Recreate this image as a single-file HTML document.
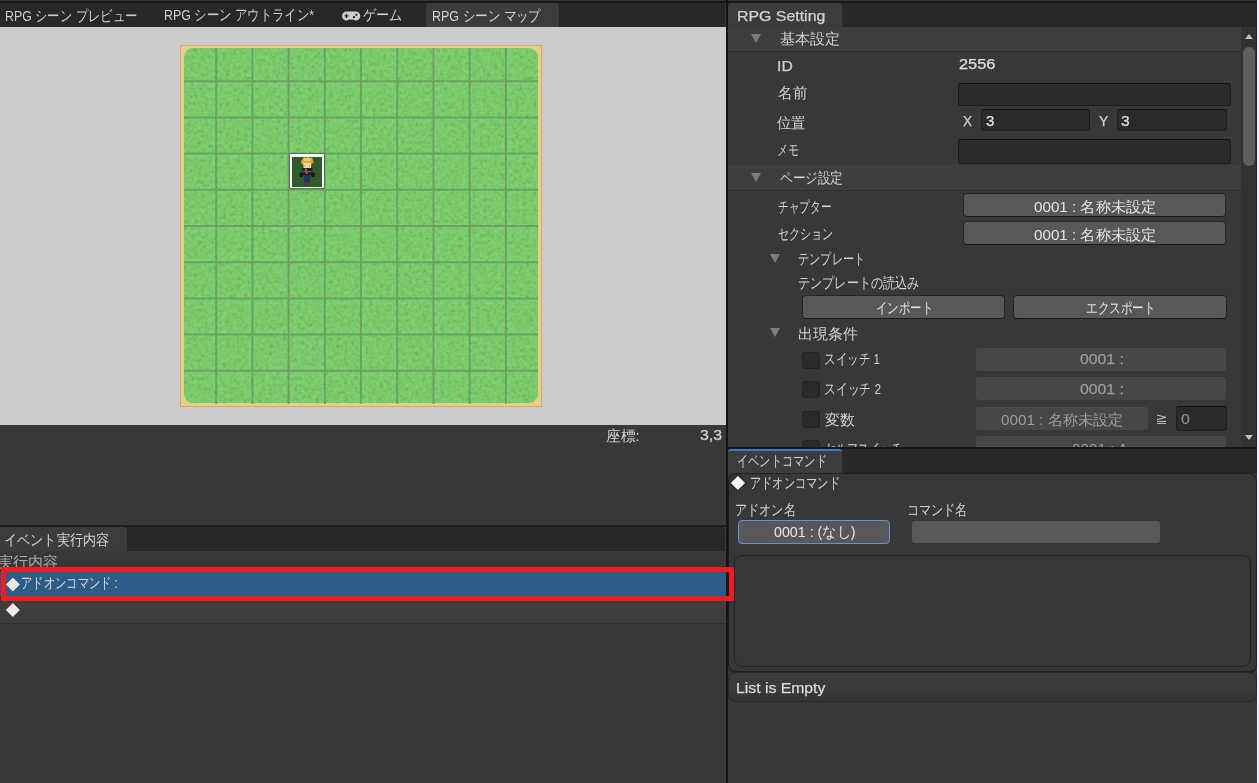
<!DOCTYPE html>
<html><head><meta charset="utf-8">
<style>
*{box-sizing:border-box;margin:0;padding:0}
html,body{width:1259px;height:783px;overflow:hidden;background:#383838}
body{position:relative;font-family:"Liberation Sans",sans-serif;font-size:15px;color:#d2d2d2}
.a{position:absolute}
.t{position:absolute;white-space:nowrap;line-height:18px;height:18px;z-index:5}
.t span{display:inline-block;transform-origin:0 0}
.t{will-change:transform}
.b span{-webkit-text-stroke:0.25px currentColor}
.fld{position:absolute;background:#2a2a2a;border:1px solid #1e1e1e;border-top-color:#101010;border-radius:3px}
.btn{position:absolute;background:#585858;border-radius:4px;border:1px solid #262626;border-bottom-color:#1c1c1c}
.dis{position:absolute;background:#474747;border-radius:3px}
.cb{position:absolute;width:18px;height:17px;background:#2a2a2a;border:1px solid #232323;border-radius:3px}
.tri{position:absolute;width:0;height:0;border-left:5px solid transparent;border-right:5px solid transparent;border-top:9px solid #7c7c7c}
body.textonly{background:#000}
body.textonly > *:not(.t){visibility:hidden}
</style></head><body>

<!-- top strip -->
<div class="a" style="left:0;top:0;width:1259px;height:1px;background:#333"></div>
<div class="a" style="left:0;top:1px;width:1259px;height:2px;background:#191919"></div>

<!-- ===== LEFT PANEL ===== -->
<div class="a" style="left:0;top:3px;width:725px;height:24px;background:#282828;border-radius:0 4px 0 0"></div>
<svg class="a" style="left:342px;top:11.2px" width="19" height="10" viewBox="0 0 19 10">
  <path d="M4.6 0.5 H13.6 A4.5 4.5 0 0 1 13.8 9.6 C12.6 9.6 12.1 8.4 11 8.4 H7.3 C6.2 8.4 5.7 9.6 4.5 9.6 A4.5 4.5 0 0 1 4.6 0.5Z" fill="#cdcdcd"/>
  <path d="M2.4 4.9 H6.6 M4.5 2.8 V7" stroke="#262626" stroke-width="1.3"/>
  <circle cx="12" cy="6.2" r="1.15" fill="#262626"/><circle cx="14.4" cy="3.8" r="1.15" fill="#262626"/>
</svg>
<div class="a" style="left:426px;top:3px;width:133px;height:24px;background:#3c3c3c;border-radius:4px 4px 0 0"></div>

<!-- map view -->
<div class="a" style="left:0;top:27px;width:726px;height:398px;background:#cbcbcb"></div>
<div class="a" style="left:180px;top:45px;width:362px;height:362px;background:#e6cf8a;border:1px solid #cfae6c"></div>
<div class="a" style="left:184px;top:48px;width:354px;height:355px;background:#73cc64;border-radius:9px"></div>
<svg class="a" style="left:180px;top:45px" width="362" height="362">
  <defs>
    <filter id="nz" x="0" y="0" width="100%" height="100%">
      <feTurbulence type="fractalNoise" baseFrequency="0.28" numOctaves="3" seed="5"/>
      <feColorMatrix type="matrix" values="1.6 0 0 0 -0.3  1.6 0 0 0 -0.3  1.6 0 0 0 -0.3  0 0 0 0 1"/>
    </filter>
    <clipPath id="gc"><rect x="4" y="3.5" width="354" height="355" rx="9"/></clipPath>
  </defs>
  <g clip-path="url(#gc)">
    <rect x="0" y="0" width="362" height="362" filter="url(#nz)" opacity="0.12" style="mix-blend-mode:overlay"/>
  </g>
  <g stroke="#62935a" stroke-width="2" opacity="0.7">
    <path d="M36.2 3V359 M72.4 3V359 M108.6 3V359 M144.8 3V359 M181 3V359 M217.2 3V359 M253.4 3V359 M289.6 3V359 M325.8 3V359"/>
    <path d="M4 36.2H358 M4 72.4H358 M4 108.6H358 M4 144.8H358 M4 181H358 M4 217.2H358 M4 253.4H358 M4 289.6H358 M4 325.8H358"/>
  </g>
</svg>
<!-- character -->
<div class="a" style="left:289px;top:153px;width:36px;height:36px;background:#4f7a4a"></div>
<div class="a" style="left:290px;top:154px;width:34px;height:34px;background:#fff"></div>
<div class="a" style="left:292px;top:157px;width:30px;height:30px;background:#2f5a2c"></div>
<svg class="a" style="left:292px;top:157px" width="30" height="30">
  <path d="M9 7 L9.5 3 L11 1.5 L12 0 L14 1 L16 0 L18 1 L20 0.5 L21 3 L21.5 7 L20 6 L19 8 L11 8 L10 6Z" fill="#eaa23c"/>
  <path d="M11.5 1.5 L15 0.5 L19 1.5 L18 4 L12 4Z" fill="#f6cf6a"/>
  <rect x="11.5" y="6" width="7.5" height="5.5" fill="#f0d6b8"/>
  <rect x="12.5" y="8" width="1.5" height="1.5" fill="#d8b020"/><rect x="16.5" y="8" width="1.5" height="1.5" fill="#d8b020"/>
  <path d="M10 11 H20.5 L20 18.5 H10.5Z" fill="#1f2233"/>
  <path d="M13 11.5 L14.5 11.5 L15.5 17 L14 17Z" fill="#c87428"/>
  <rect x="11" y="14" width="8.5" height="1.2" fill="#8a5a2a"/>
  <rect x="7.5" y="15.5" width="3" height="4.5" rx="1" fill="#1a1414"/><rect x="19.5" y="15.5" width="3.2" height="4.5" rx="1" fill="#1a1414"/>
  <rect x="12" y="18.5" width="6" height="7" fill="#24345c"/>
  <rect x="12" y="25.5" width="2.5" height="3.5" fill="#4d3a2c"/><rect x="15.5" y="25.5" width="2.5" height="3.5" fill="#4d3a2c"/>
</svg>

<div class="a" style="left:0;top:525px;width:726px;height:2px;background:#1e1e1e"></div>
<div class="a" style="left:0;top:527px;width:725px;height:24px;background:#282828;border-radius:0 4px 0 0"></div>
<div class="a" style="left:0;top:527px;width:127px;height:24px;background:#3c3c3c;border-radius:0 4px 0 0"></div>

<div class="a" style="left:0;top:601px;width:726px;height:22px;background:#3e3e3e"></div>
<div class="a" style="left:0;top:623px;width:726px;height:1px;background:#303030"></div>
<div class="a" style="left:0;top:572px;width:726px;height:24px;background:#2c5d87"></div>
<div class="a" style="left:726px;top:572px;width:3px;height:24px;background:#161616;z-index:6"></div>
<div class="a" style="left:1px;top:567px;width:733px;height:34px;border:5px solid #ed1c24;z-index:6"></div>
<svg class="a" style="left:0;top:570px" width="30" height="50"><path d="M12.9 7.6 L19.8 14.5 L12.9 21.4 L6 14.5Z M12.9 32.9 L19.8 39.9 L12.9 46.9 L5.9 39.9Z" fill="#ebebeb"/></svg>


<!-- divider -->
<div class="a" style="left:726px;top:0;width:2px;height:783px;background:#141414"></div>

<!-- ===== RIGHT PANEL ===== -->
<div class="a" style="left:728px;top:3px;width:529px;height:24px;background:#282828"></div>
<div class="a" style="left:728px;top:3px;width:114px;height:24px;background:#3c3c3c;border-radius:4px 4px 0 0"></div>

<div class="a" style="left:728px;top:27px;width:513px;height:25px;background:#3e3e3e;border-bottom:1px solid #2f2f2f"></div>
<div class="tri" style="left:751px;top:34px"></div>

<div class="fld" style="left:958px;top:83px;width:273px;height:23px"></div>
<div class="fld" style="left:981px;top:109px;width:109px;height:22px"></div>
<div class="fld" style="left:1117px;top:109px;width:110px;height:22px"></div>
<div class="fld" style="left:958px;top:139px;width:273px;height:25px"></div>

<div class="a" style="left:728px;top:165px;width:513px;height:26px;background:#3e3e3e;border-bottom:1px solid #2f2f2f"></div>
<div class="tri" style="left:751px;top:173px"></div>

<div class="btn" style="left:963px;top:193px;width:263px;height:24px"></div>
<div class="btn" style="left:963px;top:221px;width:263px;height:24px"></div>

<div class="tri" style="left:770.3px;top:254px"></div>
<div class="btn" style="left:802px;top:295px;width:203px;height:24px"></div>
<div class="btn" style="left:1013px;top:295px;width:214px;height:24px"></div>

<div class="tri" style="left:770.3px;top:328px"></div>

<div class="cb" style="left:802px;top:352px"></div>
<div class="dis" style="left:976px;top:348px;width:250px;height:23px"></div>
<div class="cb" style="left:802px;top:381px"></div>
<div class="dis" style="left:976px;top:377px;width:250px;height:23px"></div>
<div class="cb" style="left:802px;top:411px"></div>
<div class="dis" style="left:976px;top:407px;width:172px;height:23px"></div>
<div class="fld" style="left:1176px;top:406px;width:51px;height:25px"></div>
<svg class="a" style="left:1155px;top:412px" width="14" height="14"><path d="M2 3 L11 5.4 L2 7.6" fill="none" stroke="#cccccc" stroke-width="1.0"/><path d="M2 9.4 H11 M2 11.4 H11" stroke="#cccccc" stroke-width="0.9"/></svg>
<div class="a" style="left:728px;top:436px;width:513px;height:11px;overflow:hidden">
  <div class="cb" style="left:74px;top:4px"></div>
  <div class="t" style="left:96.8px;top:4px;color:#d2d2d2;--w:77.5px"><span style="transform:scaleX(1.006)">セルフスイッチ</span></div>
  <div class="dis" style="left:248px;top:0px;width:250px;height:23px"></div>
  <div class="t" style="left:344px;top:3.5px;color:#9c9c9c;--w:56px"><span style="transform:scaleX(1.057)">0001 : A</span></div>
</div>

<!-- scrollbar -->
<div class="a" style="left:1241px;top:27px;width:16px;height:420px;background:#333;border-right:1px solid #222"></div>
<div class="a" style="left:1245px;top:34px;width:0;height:0;border-left:4.5px solid transparent;border-right:4.5px solid transparent;border-bottom:5px solid #c4c4c4"></div>
<div class="a" style="left:1243px;top:47px;width:12px;height:119px;background:#5f5f5f;border-radius:6px"></div>
<div class="a" style="left:1245px;top:435px;width:0;height:0;border-left:4.5px solid transparent;border-right:4.5px solid transparent;border-top:5px solid #c4c4c4"></div>

<div class="a" style="left:728px;top:447px;width:531px;height:2px;background:#191919"></div>

<!-- lower right -->
<div class="a" style="left:728px;top:449px;width:529px;height:24px;background:#282828"></div>
<div class="a" style="left:728px;top:449px;width:114px;height:24px;background:#3c3c3c;border-radius:3px 3px 0 0;border-top:2px solid #3a79bb"></div>

<div class="a" style="left:728px;top:473px;width:529px;height:200px;border:1px solid #222;border-left:1.5px solid #1c1c1c;border-bottom:2px solid #222;border-radius:8px;background:#383838"></div>
<svg class="a" style="left:726px;top:470px" width="30" height="30"><path d="M11.9 5.7 L19.1 12.9 L11.9 20.1 L4.7 12.9Z" fill="#252525" stroke="#262626" stroke-width="2.6" stroke-linejoin="round"/><path d="M11.9 5.7 L19.1 12.9 L11.9 20.1 L4.7 12.9Z" fill="#f4f4f4"/></svg>
<div class="btn" style="left:738px;top:520px;width:152px;height:24px;border:1px solid #5d94d8"></div>
<div class="a" style="left:912px;top:521px;width:248px;height:22px;background:#585858;border-radius:3px"></div>
<div class="a" style="left:734px;top:555px;width:517px;height:112px;border:1px solid #242424;border-radius:8px"></div>

<div class="a" style="left:728px;top:672px;width:529px;height:30px;border:1px solid #2a2a2a;border-radius:8px;background:linear-gradient(#3a3a3a 0,#3a3a3a 70%,#363636 70%)"></div>

<div class="a" style="left:1257px;top:0;width:2px;height:783px;background:#eef0f8"></div>
<div class="t" id="tab1" style="left:4.80px;top:6.95px;color:#cfcfcf;--w:132.24px"><span style="transform:scaleX(1.0251)">RPG シーン プレビュー</span></div>
<div class="t" id="tab2" style="left:163.51px;top:5.95px;color:#cfcfcf;--w:149.99px"><span style="transform:scaleX(1.0274)">RPG シーン アウトライン*</span></div>
<div class="t" id="tab3" style="left:362.59px;top:5.95px;color:#cfcfcf;--w:39.43px"><span style="transform:scaleX(1.1950)">ゲーム</span></div>
<div class="t" id="tab4" style="left:432.01px;top:6.95px;color:#d2d2d2;--w:108.99px"><span style="transform:scaleX(1.0186)">RPG シーン マップ</span></div>
<div class="t" id="coord" style="left:605.79px;top:426.65px;color:#d2d2d2;--w:33.69px"><span style="transform:scaleX(1.2956)">座標:</span></div>
<div class="t b" id="coordv" style="left:700.00px;top:426.30px;color:#d2d2d2;--w:22.16px"><span style="transform:scaleX(1.1081)">3,3</span></div>
<div class="t" id="evtab" style="left:4.21px;top:530.65px;color:#d2d2d2;--w:105.01px"><span style="transform:scaleX(1.1933)">イベント実行内容</span></div>
<div class="t" id="jikko" style="left:-2.50px;top:553.20px;color:#a9a9a9;--w:59.90px"><span style="transform:scaleX(1.3614)">実行内容</span></div>
<div class="t" id="addoncmd1" style="left:20.91px;top:574.15px;color:#d8d8d8;--w:96.70px"><span style="transform:scaleX(1.0073)">アドオンコマンド :</span></div>
<div class="t b" id="rpgset" style="left:736.52px;top:6.55px;color:#d2d2d2;--w:88.31px"><span style="transform:scaleX(1.0769)">RPG Setting</span></div>
<div class="t" id="kihon" style="left:779.92px;top:30.00px;color:#d2d2d2;--w:59.92px"><span style="transform:scaleX(1.3619)">基本設定</span></div>
<div class="t b" id="id" style="left:776.56px;top:56.95px;color:#d2d2d2;--w:15.76px"><span style="transform:scaleX(1.0504)">ID</span></div>
<div class="t b" id="idv" style="left:959.41px;top:55.20px;color:#e0e0e0;--w:36.40px"><span style="transform:scaleX(1.1374)">2556</span></div>
<div class="t" id="name" style="left:777.50px;top:84.15px;color:#d2d2d2;--w:29.02px"><span style="transform:scaleX(1.3190)">名前</span></div>
<div class="t" id="pos" style="left:777.48px;top:113.50px;color:#d2d2d2;--w:28.95px"><span style="transform:scaleX(1.3159)">位置</span></div>
<div class="t" id="memo" style="left:776.56px;top:140.70px;color:#d2d2d2;--w:22.15px"><span style="transform:scaleX(1.0070)">メモ</span></div>
<div class="t b" id="xl" style="left:963.00px;top:112.20px;color:#d2d2d2;--w:9.00px"><span style="transform:scaleX(0.9000)">X</span></div>
<div class="t b" id="xv" style="left:986.40px;top:111.50px;color:#e0e0e0;--w:8.37px"><span style="transform:scaleX(1.0461)">3</span></div>
<div class="t b" id="yl" style="left:1099.00px;top:112.20px;color:#d2d2d2;--w:9.29px"><span style="transform:scaleX(0.9294)">Y</span></div>
<div class="t b" id="yv" style="left:1121.34px;top:112.00px;color:#e0e0e0;--w:8.65px"><span style="transform:scaleX(1.0817)">3</span></div>
<div class="t" id="page" style="left:779.60px;top:169.05px;color:#d2d2d2;--w:63.10px"><span style="transform:scaleX(1.1474)">ページ設定</span></div>
<div class="t" id="chap" style="left:778.00px;top:198.35px;color:#d2d2d2;--w:53.53px"><span style="transform:scaleX(0.9733)">チャプター</span></div>
<div class="t" id="sect" style="left:778.00px;top:224.90px;color:#d2d2d2;--w:55.58px"><span style="transform:scaleX(1.0106)">セクション</span></div>
<div class="t" id="chapv" style="left:1033.81px;top:198.10px;color:#e4e4e4;--w:122.40px"><span style="transform:scaleX(1.2364)">0001 : 名称未設定</span></div>
<div class="t" id="sectv" style="left:1033.81px;top:225.95px;color:#e4e4e4;--w:122.40px"><span style="transform:scaleX(1.2364)">0001 : 名称未設定</span></div>
<div class="t" id="tmpl" style="left:797.54px;top:249.65px;color:#d2d2d2;--w:67.34px"><span style="transform:scaleX(1.0203)">テンプレート</span></div>
<div class="t" id="tmplr" style="left:797.60px;top:273.80px;color:#d2d2d2;--w:121.40px"><span style="transform:scaleX(1.1037)">テンプレートの読込み</span></div>
<div class="t" id="imp" style="left:876.27px;top:298.75px;color:#e4e4e4;--w:57.00px"><span style="transform:scaleX(1.0363)">インポート</span></div>
<div class="t" id="exp" style="left:1085.96px;top:298.80px;color:#e4e4e4;--w:69.49px"><span style="transform:scaleX(1.0529)">エクスポート</span></div>
<div class="t" id="cond" style="left:798.37px;top:324.60px;color:#d2d2d2;--w:59.74px"><span style="transform:scaleX(1.3577)">出現条件</span></div>
<div class="t" id="sw1" style="left:824.09px;top:350.00px;color:#d2d2d2;--w:55.92px"><span style="transform:scaleX(0.9986)">スイッチ 1</span></div>
<div class="t" id="sw2" style="left:824.11px;top:379.80px;color:#d2d2d2;--w:56.98px"><span style="transform:scaleX(1.0175)">スイッチ 2</span></div>
<div class="t" id="var" style="left:825.06px;top:410.80px;color:#d2d2d2;--w:29.91px"><span style="transform:scaleX(1.3596)">変数</span></div>
<div class="t b" id="d1" style="left:1080.00px;top:349.90px;color:#9c9c9c;--w:43.93px"><span style="transform:scaleX(1.0983)">0001 :</span></div>
<div class="t b" id="d2" style="left:1080.00px;top:379.95px;color:#9c9c9c;--w:43.93px"><span style="transform:scaleX(1.0983)">0001 :</span></div>
<div class="t" id="d3" style="left:1001.20px;top:411.10px;color:#9c9c9c;--w:122.70px"><span style="transform:scaleX(1.2394)">0001 : 名称未設定</span></div>
<div class="t b" id="zero" style="left:1180.74px;top:409.70px;color:#8c8c8c;--w:8.76px"><span style="transform:scaleX(1.0952)">0</span></div>
<div class="t" id="evcmd" style="left:736.80px;top:452.45px;color:#d2d2d2;--w:89.83px"><span style="transform:scaleX(1.0208)">イベントコマンド</span></div>
<div class="t" id="addoncmd" style="left:749.81px;top:474.25px;color:#d2d2d2;--w:89.92px"><span style="transform:scaleX(1.0219)">アドオンコマンド</span></div>
<div class="t" id="addonname" style="left:734.62px;top:500.90px;color:#d2d2d2;--w:60.73px"><span style="transform:scaleX(1.1042)">アドオン名</span></div>
<div class="t" id="cmdname" style="left:907.09px;top:501.00px;color:#d2d2d2;--w:60.60px"><span style="transform:scaleX(1.1019)">コマンド名</span></div>
<div class="t" id="addonv" style="left:773.50px;top:522.95px;color:#e8e8e8;--w:81.52px"><span style="transform:scaleX(1.0726)">0001 : (なし)</span></div>
<div class="t b" id="empty" style="left:736.12px;top:678.60px;color:#dcdcdc;--w:89.29px"><span style="transform:scaleX(1.0505)">List is Empty</span></div>
<script>
(function(){var es=document.querySelectorAll('.t');for(var i=0;i<es.length;i++){var e=es[i];var w=parseFloat(e.style.getPropertyValue('--w'));var s=e.firstElementChild;if(!s||!w)continue;s.style.transform='none';var r=s.getBoundingClientRect().width;if(r>0)s.style.transform='scaleX('+(w/r)+')';}})();
</script>
</body></html>
